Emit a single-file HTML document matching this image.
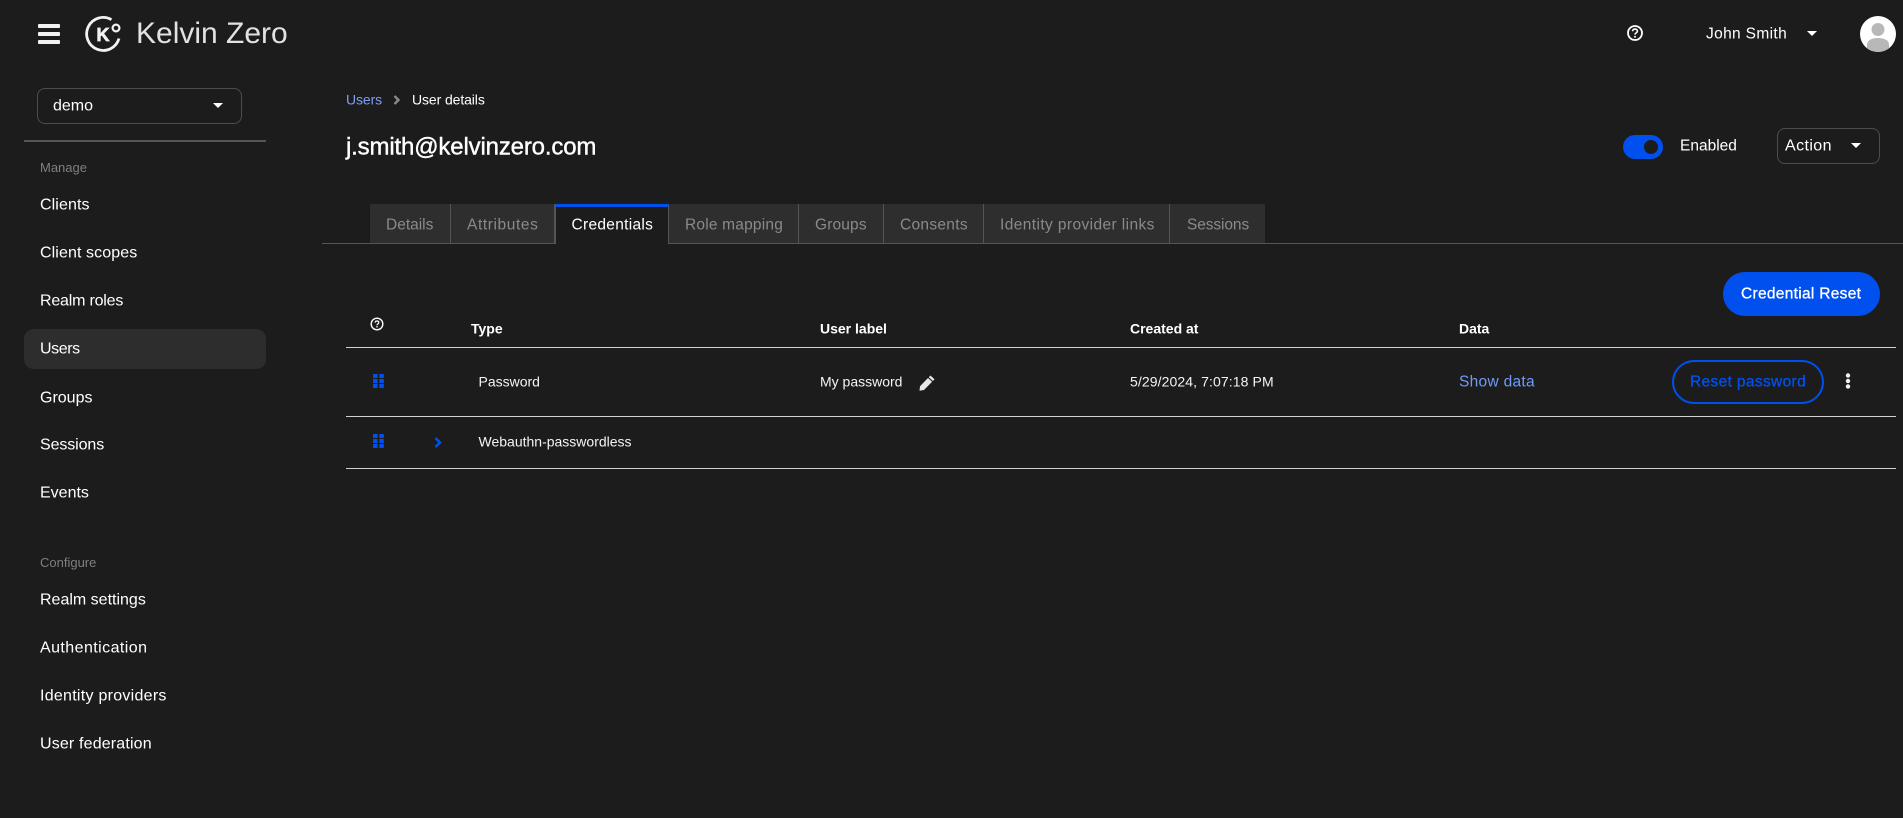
<!DOCTYPE html>
<html lang="en"><head><meta charset="utf-8"><title>Kelvin Zero</title>
<style>
html,body{margin:0;padding:0;background:#1c1c1c;width:1903px;height:818px;overflow:hidden}
body{position:relative;font-family:"Liberation Sans",sans-serif;color:#fff}
.t{position:absolute;white-space:nowrap;transform:translateY(-50%);line-height:1.2}
.n{left:40px;font-size:16px;color:#fff}
.b{position:absolute}
.tab{position:absolute;top:204px;height:39px;background:#2e2e2e;border-right:1px solid #555;box-sizing:border-box}
.tt{font-size:15.5px;color:#8a8a8a;top:225.5px}
.h{font-size:14px;font-weight:bold;top:328.5px}
.c{font-size:14px;color:#f4f4f4}
.l{position:absolute;left:346px;width:1550px;height:1px;background:#d2d2d2}
svg{position:absolute;overflow:visible}
</style></head><body>
<!-- header -->
<div class="b" style="left:38px;top:24px;width:22px;height:4px;background:#f2f2f2;border-radius:1px"></div>
<div class="b" style="left:38px;top:32px;width:22px;height:4px;background:#f2f2f2;border-radius:1px"></div>
<div class="b" style="left:38px;top:40px;width:22px;height:4px;background:#f2f2f2;border-radius:1px"></div>
<svg style="left:0;top:0" width="130" height="60" viewBox="0 0 130 60"><path d="M111.500 19.700A16.500 16.500 0 1 0 119 38.500" fill="none" stroke="#f2f2f2" stroke-width="2.800"/><circle cx="116" cy="28" r="3.400" fill="none" stroke="#f2f2f2" stroke-width="2.200"/><text x="96.500" y="41" font-family="Liberation Sans" font-weight="bold" font-size="18" fill="#f2f2f2" stroke="#f2f2f2" stroke-width=".7">K</text></svg>
<span class="t" style="left:136px;top:34px;font-size:30px;color:#e2e2e2">Kelvin Zero</span>
<svg style="left:1626px;top:24px" width="18" height="18" viewBox="0 0 18 18"><circle cx="9" cy="9" r="7" fill="none" stroke="#fff" stroke-width="1.800"/><path d="M6.600 7.200C6.600 5.900 7.700 5.100 9 5.100s2.400.8 2.400 2c0 1.800-2.400 1.700-2.400 3.500" fill="none" stroke="#fff" stroke-width="1.600"/><circle cx="9" cy="12.800" r="1" fill="#fff"/></svg>
<span class="t" style="left:1706px;top:35px;font-size:15.500px;letter-spacing:.35px">John Smith</span>
<svg style="left:1807px;top:31px" width="10" height="5" viewBox="0 0 10 5"><path d="M0 0H10L5 5Z" fill="#fff"/></svg>
<svg style="left:1860px;top:16px" width="36" height="36" viewBox="0 0 36 36"><defs><clipPath id="av"><circle cx="18" cy="18" r="18"/></clipPath></defs><circle cx="18" cy="18" r="18" fill="#fff"/><g clip-path="url(#av)" fill="#b8b8b8"><circle cx="18" cy="13.500" r="6.500"/><path d="M7 36V29C7 24.500 11 22 18 22S29 24.500 29 29V36Z"/></g></svg>
<!-- sidebar -->
<div class="b" style="left:37px;top:88px;width:205px;height:36px;box-sizing:border-box;border:1px solid #4d4d4d;border-radius:8px"></div>
<span class="t" style="left:53px;top:106px;font-size:16px">demo</span>
<svg style="left:213px;top:103px" width="10" height="5" viewBox="0 0 10 5"><path d="M0 0H10L5 5Z" fill="#fff"/></svg>
<div class="b" style="left:24px;top:140px;width:242px;height:2px;background:#555"></div>
<span class="t" style="left:40px;top:168px;font-size:13px;color:#7f7f7f">Manage</span>
<span class="t n" style="top:205px;letter-spacing:.1px">Clients</span>
<span class="t n" style="top:253px;letter-spacing:.1px">Client scopes</span>
<span class="t n" style="top:301px;letter-spacing:-.2px">Realm roles</span>
<div class="b" style="left:24px;top:329px;width:242px;height:40px;background:#2d2d2d;border-radius:10px"></div>
<span class="t n" style="top:348.500px;letter-spacing:-.4px">Users</span>
<span class="t n" style="top:397.500px">Groups</span>
<span class="t n" style="top:445px;letter-spacing:-.1px">Sessions</span>
<span class="t n" style="top:493px">Events</span>
<span class="t" style="left:40px;top:562.500px;font-size:13px;color:#7f7f7f">Configure</span>
<span class="t n" style="top:600px">Realm settings</span>
<span class="t n" style="top:648px;letter-spacing:.43px">Authentication</span>
<span class="t n" style="top:696px;letter-spacing:.27px">Identity providers</span>
<span class="t n" style="top:744px;letter-spacing:.16px">User federation</span>
<!-- title -->
<span class="t" style="left:346px;top:100px;font-size:14px;color:#7d9fef;letter-spacing:-.1px">Users</span>
<svg style="left:393px;top:95px" width="7" height="10" viewBox="0 0 7 10"><path d="M1.500 1L5.500 5L1.500 9" fill="none" stroke="#8a8a8a" stroke-width="2.400"/></svg>
<span class="t" style="left:412px;top:100px;font-size:14px;letter-spacing:-.1px">User details</span>
<span class="t" style="left:346px;top:148px;font-size:24px;-webkit-text-stroke:.4px #fff;letter-spacing:-.16px">j.smith@kelvinzero.com</span>
<div class="b" style="left:1623px;top:135px;width:40px;height:24px;border-radius:12px;background:#0050ef"></div>
<div class="b" style="left:1644px;top:140px;width:14px;height:14px;border-radius:50%;background:#1c1c1c"></div>
<span class="t" style="left:1680px;top:147px;font-size:15.500px">Enabled</span>
<div class="b" style="left:1777px;top:128px;width:103px;height:36px;box-sizing:border-box;border:1px solid #4d4d4d;border-radius:8px"></div>
<span class="t" style="left:1785px;top:145.500px;font-size:16px;letter-spacing:.4px">Action</span>
<svg style="left:1851px;top:143px" width="10" height="5" viewBox="0 0 10 5"><path d="M0 0H10L5 5Z" fill="#fff"/></svg>
<!-- tabs -->
<div class="b" style="left:322px;top:243px;width:1581px;height:1px;background:#555"></div>
<div class="tab" style="left:370px;width:81px"></div>
<div class="tab" style="left:451px;width:104px"></div>
<div class="b" style="left:555px;top:204px;width:114px;height:40px;box-sizing:border-box;background:#1c1c1c;border-top:3px solid #0050ef;border-left:1px solid #555;border-right:1px solid #555"></div>
<div class="tab" style="left:669px;width:130px"></div>
<div class="tab" style="left:799px;width:85px"></div>
<div class="tab" style="left:884px;width:100px"></div>
<div class="tab" style="left:984px;width:186px"></div>
<div class="tab" style="left:1170px;width:95px;border-right:0"></div>
<span class="t tt" style="left:386px">Details</span>
<span class="t tt" style="left:467px;letter-spacing:.6px">Attributes</span>
<span class="t tt" style="left:571.500px;color:#fff;letter-spacing:.3px">Credentials</span>
<span class="t tt" style="left:685px;letter-spacing:.2px">Role mapping</span>
<span class="t tt" style="left:815px;letter-spacing:.15px">Groups</span>
<span class="t tt" style="left:900px;letter-spacing:.3px">Consents</span>
<span class="t tt" style="left:1000px;letter-spacing:.4px">Identity provider links</span>
<span class="t tt" style="left:1187px;letter-spacing:-.1px">Sessions</span>
<!-- action -->
<div class="b" style="left:1723px;top:272px;width:157px;height:44px;border-radius:22px;background:#0050ef"></div>
<span class="t" style="left:1741px;top:294.500px;font-size:15.500px;-webkit-text-stroke:.3px #fff;letter-spacing:.3px">Credential Reset</span>
<!-- table -->
<svg style="left:370px;top:317px" width="14" height="14" viewBox="0 0 14 14"><circle cx="7" cy="7" r="5.800" fill="none" stroke="#fff" stroke-width="1.400"/><path d="M5.200 5.600C5.200 4.600 6 4 7 4s1.800.6 1.800 1.500c0 1.400-1.800 1.300-1.800 2.700" fill="none" stroke="#fff" stroke-width="1.200"/><circle cx="7" cy="9.800" r=".8" fill="#fff"/></svg>
<span class="t h" style="left:471px">Type</span>
<span class="t h" style="left:820px">User label</span>
<span class="t h" style="left:1130px">Created at</span>
<span class="t h" style="left:1459px">Data</span>
<div class="l" style="top:347px"></div>
<div class="l" style="top:416px"></div>
<div class="l" style="top:468px"></div>
<svg style="left:373px;top:374px" width="11" height="14" viewBox="0 0 11 14" fill="#0050ef"><rect width="4.500" height="4"/><rect x="6.300" width="4.500" height="4"/><rect y="5" width="4.500" height="4"/><rect x="6.300" y="5" width="4.500" height="4"/><rect y="10" width="4.500" height="4"/><rect x="6.300" y="10" width="4.500" height="4"/></svg>
<svg style="left:373px;top:434px" width="11" height="14" viewBox="0 0 11 14" fill="#0050ef"><rect width="4.500" height="4"/><rect x="6.300" width="4.500" height="4"/><rect y="5" width="4.500" height="4"/><rect x="6.300" y="5" width="4.500" height="4"/><rect y="10" width="4.500" height="4"/><rect x="6.300" y="10" width="4.500" height="4"/></svg>
<svg style="left:434px;top:437px" width="8" height="11" viewBox="0 0 8 11"><path d="M1.500 1L6 5.500L1.500 10" fill="none" stroke="#0050ef" stroke-width="2.600"/></svg>
<span class="t c" style="left:478.500px;top:382px">Password</span>
<span class="t c" style="left:820px;top:382px">My password</span>
<svg style="left:919px;top:375px" width="16" height="16" viewBox="0 0 16 16"><path d="M11.400 0.500L15.500 4.300L13.900 6L9.800 2.200Z M9 3L13.100 6.800L5 15L0.500 15.800L1 11.200Z" fill="#e8e8e8"/></svg>
<span class="t c" style="left:1130px;top:382px;letter-spacing:.1px">5/29/2024, 7:07:18 PM</span>
<span class="t" style="left:1459px;top:383px;font-size:15.500px;color:#6f9bf5;letter-spacing:.3px">Show data</span>
<div class="b" style="left:1672px;top:360px;width:152px;height:44px;box-sizing:border-box;border:2px solid #0050ef;border-radius:22px"></div>
<span class="t" style="left:1690px;top:383px;font-size:15.500px;color:#0050ef;-webkit-text-stroke:.3px #0050ef;letter-spacing:.35px">Reset password</span>
<svg style="left:1845px;top:373px" width="6" height="16" viewBox="0 0 6 16" fill="#f2f2f2"><circle cx="3" cy="2.500" r="2.200"/><circle cx="3" cy="8" r="2.200"/><circle cx="3" cy="13.500" r="2.200"/></svg>
<span class="t c" style="left:478.500px;top:442px">Webauthn-passwordless</span>
</body></html>
